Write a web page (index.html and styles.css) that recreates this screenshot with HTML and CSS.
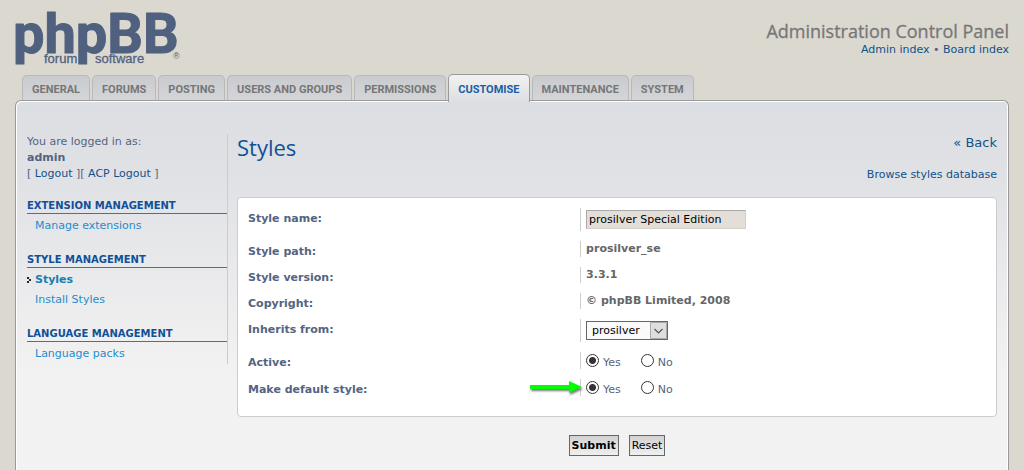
FILE: index.html
```html
<!DOCTYPE html>
<html lang="en">
<head>
<meta charset="utf-8">
<meta name="viewport" content="width=device-width, initial-scale=1">
<title>Administration Control Panel</title>
<link rel="stylesheet" href="styles.css">
</head>
<body>
<header class="page-header">
  <a class="logo" href="#">
    <svg width="166" height="56" viewBox="0 0 166 56" role="img" aria-label="phpBB forum software">
      <text class="logo-name" x="-2" y="43">phpBB</text>
      <text class="logo-sub" x="29" y="53">forum</text>
      <text class="logo-sub" x="80" y="53">software</text>
      <text class="logo-mark" x="158" y="49">®</text>
    </svg>
  </a>
  <div class="header-info">
    <h1 class="site-title">Administration Control Panel</h1>
    <p class="header-links"><a href="#">Admin index</a> • <a href="#">Board index</a></p>
  </div>
</header>

<nav aria-label="Sections">
  <ul class="tabs">
    <li class="tab"><a href="#">GENERAL</a></li>
    <li class="tab"><a href="#">FORUMS</a></li>
    <li class="tab"><a href="#">POSTING</a></li>
    <li class="tab"><a href="#">USERS AND GROUPS</a></li>
    <li class="tab"><a href="#">PERMISSIONS</a></li>
    <li class="tab tab-active"><a href="#" aria-current="page">CUSTOMISE</a></li>
    <li class="tab"><a href="#">MAINTENANCE</a></li>
    <li class="tab"><a href="#">SYSTEM</a></li>
  </ul>
</nav>

<div class="panel">
  <aside class="sidebar">
    <p class="login">You are logged in as:<br><strong>admin</strong><br>[ <a href="#">Logout</a> ][ <a href="#">ACP Logout</a> ]</p>
    <h2 class="menu-title">EXTENSION MANAGEMENT</h2>
    <ul class="menu">
      <li><a href="#">Manage extensions</a></li>
    </ul>
    <h2 class="menu-title">STYLE MANAGEMENT</h2>
    <ul class="menu">
      <li class="current">
        <svg class="marker" width="4" height="6" viewBox="0 0 4 6" aria-hidden="true"><path d="M0 0h2v2H0zM2 2h2v2H2zM0 4h2v2H0z"/></svg>
        <a href="#">Styles</a>
      </li>
      <li><a href="#">Install Styles</a></li>
    </ul>
    <h2 class="menu-title">LANGUAGE MANAGEMENT</h2>
    <ul class="menu">
      <li><a href="#">Language packs</a></li>
    </ul>
  </aside>

  <main class="main">
    <div class="main-head">
      <h2 class="title">Styles</h2>
      <a class="back" href="#">« Back</a>
    </div>
    <p class="browse"><a href="#">Browse styles database</a></p>
    <form>
      <div class="fields">
        <div class="row">
          <label class="term" for="style-name">Style name:</label>
          <div class="value"><input class="text" id="style-name" type="text" value="prosilver Special Edition"></div>
        </div>
        <div class="row"><span class="term">Style path:</span><strong class="value">prosilver_se</strong></div>
        <div class="row"><span class="term">Style version:</span><strong class="value">3.3.1</strong></div>
        <div class="row"><span class="term">Copyright:</span><strong class="value">© phpBB Limited, 2008</strong></div>
        <div class="row">
          <label class="term" for="parent">Inherits from:</label>
          <div class="value">
            <span class="select-box">
              <select id="parent"><option>prosilver</option></select>
              <svg class="select-arrow" width="17" height="17" viewBox="0 0 17 17" aria-hidden="true"><path class="select-face" d="M.5.5h16v16H.5z"/><path class="select-chevron" d="M4.500 7l4 4 4-4"/></svg>
            </span>
          </div>
        </div>
        <div class="row" role="radiogroup" aria-labelledby="active-label">
          <span class="term" id="active-label">Active:</span>
          <div class="value radios">
            <label><input type="radio" name="active" checked>Yes</label>
            <label><input type="radio" name="active">No</label>
          </div>
        </div>
        <div class="row" role="radiogroup" aria-labelledby="default-label">
          <span class="term" id="default-label">Make default style:</span>
          <div class="value radios">
            <svg class="pointer" width="58" height="20" viewBox="0 0 58 20" aria-hidden="true"><path d="M3 6h39V2l13 6-13 6v-4H3z"/></svg>
            <label><input type="radio" name="default" checked>Yes</label>
            <label><input type="radio" name="default">No</label>
          </div>
        </div>
      </div>
      <div class="actions">
        <button class="button button-main" type="submit">Submit</button>
        <button class="button" type="reset">Reset</button>
      </div>
    </form>
  </main>
</div>
</body>
</html>
```
FILE: styles.css
```css
* {
  box-sizing: border-box;
}

body {
  display: flex;
  flex-direction: column;
  min-height: 100vh;
  margin: 0;
  padding: 10px 15px 0;
  background: #dbd8d0;
  color: #536482;
  font: 11px/16px Verdana, "DejaVu Sans", sans-serif;
}

h1, h2, p, ul {
  margin: 0;
  padding: 0;
}

ul {
  list-style: none;
}

a {
  color: #105289;
  text-decoration: none;
}

a:hover {
  text-decoration: underline;
}

.page-header {
  display: flex;
  justify-content: space-between;
  height: 64px;
}

.logo svg {
  display: block;
  overflow: visible;
  fill: #50617f;
}

.logo-name {
  font: 700 56px Roboto, sans-serif;
  stroke: #50617f;
  stroke-width: 1px;
  stroke-linejoin: round;
}

.logo-sub {
  font: 13px "Liberation Sans", Arial, sans-serif;
  stroke: #50617f;
  stroke-width: 0.3px;
}

.logo-mark {
  font: 9px "Liberation Sans", Arial, sans-serif;
}

.header-info {
  padding-top: 10px;
  text-align: right;
}

.site-title {
  color: #777;
  font: 400 18px/22px "Open Sans", sans-serif;
  -webkit-text-stroke: 0.3px #777;
}

.tabs {
  display: flex;
  gap: 2px;
  height: 26px;
  padding-left: 7px;
}

.tab {
  height: 25px;
  margin-top: 1px;
  padding: 0 9px;
  border: 1px solid #b9b9b9;
  border-bottom: 0;
  border-radius: 5px 5px 0 0;
  background: linear-gradient(#c9cbcf, #d4d5d8);
  font: 700 11px/27px Roboto, sans-serif;
}

.tab a {
  color: #767676;
}

.tab-active {
  position: relative;
  height: 28px;
  margin-top: 0;
  border-color: #999;
  background: linear-gradient(#f2f2f2, #dcdee2);
  line-height: 29px;
}

.tab-active a {
  color: #1b5ea5;
}

.panel {
  display: flex;
  flex: 1;
  align-items: flex-start;
  gap: 9px;
  padding: 33px 11px 14px 10px;
  border: 1px solid #999;
  border-bottom: 0;
  border-radius: 6px 6px 0 0;
  background: linear-gradient(#dbdee2, #e0e1e5 70px, #f2f2f2 270px);
  box-shadow: inset 1px 1px #fff, inset -1px 0 #fff;
}

.sidebar {
  flex: 0 0 202px;
  padding-left: 1px;
  border-right: 1px solid #ccc;
}

.menu-title {
  margin-top: 16px;
  border-bottom: 1px solid #327aa5;
  color: #115098;
  font: 700 10px/15px Verdana, "DejaVu Sans", sans-serif;
}

.menu li {
  position: relative;
  padding-left: 8px;
  line-height: 20px;
}

.menu {
  padding-top: 2px;
}

.menu a {
  color: #1f8ccc;
}

.menu .current a {
  color: #147fb4;
  font-weight: 700;
}

.marker {
  position: absolute;
  top: 7px;
  left: 0;
  fill: #222;
}

.main {
  flex: 1;
  min-width: 0;
}

.main-head {
  display: flex;
  justify-content: space-between;
  align-items: flex-start;
}

.title {
  color: #115098;
  font: 400 22px/26px "Open Sans", sans-serif;
}

.back {
  font-size: 13px;
  line-height: 18px;
}

.browse {
  margin: 7px 0 14px;
  text-align: right;
}

.fields {
  display: flex;
  flex-direction: column;
  gap: 10px;
  padding: 10px 10px 20px;
  border: 1px solid #ccc;
  border-radius: 4px;
  background: #fff;
}

.row {
  display: grid;
  grid-template-columns: 45% 1fr;
}

.term {
  height: 16px;
  padding-top: 3px;
  font-weight: 700;
}

.value {
  position: relative;
  padding-left: 5px;
  border-left: 1px solid #ccc;
  color: #666;
}

.text {
  display: block;
  width: 160px;
  height: 19px;
  margin: 2px 0;
  padding: 2px;
  border: 1px solid;
  border-color: #a9a9a9 #d4d0c8 #d4d0c8 #a9a9a9;
  background: #e3dfd8;
  color: #000;
  font: inherit;
}

.select-box {
  display: block;
  position: relative;
  width: 82px;
  height: 19px;
  margin: 2px 0;
}

.select-box select {
  appearance: none;
  width: 100%;
  height: 100%;
  padding: 0 5px;
  border: 1px solid #666;
  border-radius: 0;
  background: #fafafa;
  color: #000;
  font: inherit;
}

.select-arrow {
  position: absolute;
  top: 1px;
  right: 1px;
  pointer-events: none;
}

.select-face {
  fill: #dedede;
  stroke: #aaa;
}

.select-chevron {
  fill: none;
  stroke: #555;
  stroke-width: 1.2px;
}

.radios {
  display: flex;
  gap: 20px;
  height: 17px;
}

.radios label {
  display: flex;
  gap: 4px;
  color: #536482;
  line-height: 21px;
}

.radios input {
  appearance: none;
  width: 13px;
  height: 13px;
  margin: 2px 0 0;
  border: 1px solid #333;
  border-radius: 50%;
  background: #fff;
}

.radios input:checked {
  background: radial-gradient(circle, #333 3px, #fff 4px);
}

.pointer {
  position: absolute;
  top: 0;
  left: -54px;
  fill: #0f0;
  filter: drop-shadow(1px 2px 1px #777);
}

.actions {
  display: flex;
  justify-content: center;
  gap: 10px;
  padding-top: 18px;
}

.button {
  height: 21px;
  padding: 0 2px;
  border: 1px solid #666;
  background: linear-gradient(#d2d2d2, #efefef);
  color: #000;
  font: inherit;
}

.button-main {
  font-weight: 700;
}
```
